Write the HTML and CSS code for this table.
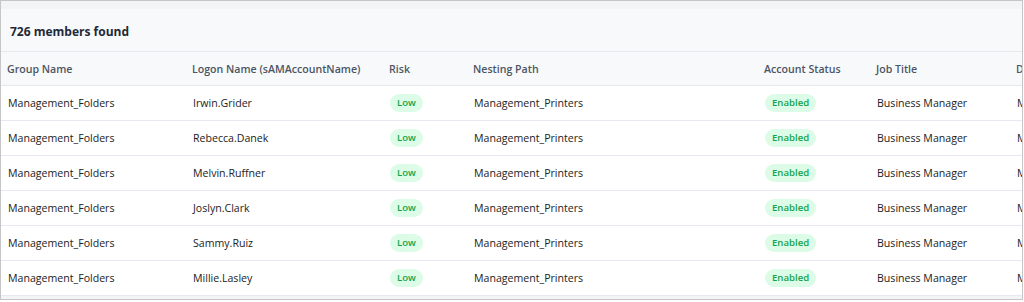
FILE: index.html
```html
<!DOCTYPE html>
<html>
<head>
<meta charset="utf-8">
<link rel="stylesheet" href="styles.css">
</head>
<body>
<div class="frame">
  <div class="title">726 members found</div>
  <table class="grid">
    <colgroup>
      <col class="c1"><col class="c2"><col class="c3"><col class="c4"><col class="c5"><col class="c6"><col class="c7">
    </colgroup>
    <thead>
      <tr>
        <th>Group Name</th><th>Logon Name (sAMAccountName)</th><th>Risk</th><th>Nesting Path</th><th>Account Status</th><th>Job Title</th><th>Department</th>
      </tr>
    </thead>
    <tbody>
      <tr><td>Management_Folders</td><td>Irwin.Grider</td><td><span class="pill">Low</span></td><td>Management_Printers</td><td><span class="pill">Enabled</span></td><td>Business Manager</td><td>Management</td></tr>
      <tr><td>Management_Folders</td><td>Rebecca.Danek</td><td><span class="pill">Low</span></td><td>Management_Printers</td><td><span class="pill">Enabled</span></td><td>Business Manager</td><td>Management</td></tr>
      <tr><td>Management_Folders</td><td>Melvin.Ruffner</td><td><span class="pill">Low</span></td><td>Management_Printers</td><td><span class="pill">Enabled</span></td><td>Business Manager</td><td>Management</td></tr>
      <tr><td>Management_Folders</td><td>Joslyn.Clark</td><td><span class="pill">Low</span></td><td>Management_Printers</td><td><span class="pill">Enabled</span></td><td>Business Manager</td><td>Management</td></tr>
      <tr><td>Management_Folders</td><td>Sammy.Ruiz</td><td><span class="pill">Low</span></td><td>Management_Printers</td><td><span class="pill">Enabled</span></td><td>Business Manager</td><td>Management</td></tr>
      <tr><td>Management_Folders</td><td>Millie.Lasley</td><td><span class="pill">Low</span></td><td>Management_Printers</td><td><span class="pill">Enabled</span></td><td>Business Manager</td><td>Management</td></tr>
    </tbody>
  </table>
</div>
</body>
</html>
```
FILE: styles.css
```css
html, body {
  margin: 0;
  padding: 0;
  background: #ffffff;
}
body {
  font-family: "Open Sans", "Noto Sans", sans-serif;
  color: #222;
}
.frame {
  box-sizing: border-box;
  width: 1023px;
  height: 300px;
  border: 1px solid #c6c6c6;
  background: #f3f4f6;
  padding-top: 8px;
  overflow: hidden;
}
.title {
  height: 43px;
  box-sizing: border-box;
  border-bottom: 1px solid #e6e8eb;
  background: #f8f9fb;
  display: flex;
  align-items: center;
  padding-left: 9px;
  padding-top: 2px;
  font-size: 12px;
  font-weight: 700;
  color: #1f2937;
}
.grid {
  border-collapse: collapse;
  table-layout: fixed;
  width: 1150px;
  background: #fff;
}
.c1 { width: 185px; }
.c2 { width: 197px; }
.c3 { width: 84px; }
.c4 { width: 291px; }
.c5 { width: 112px; }
.c6 { width: 140px; }
.c7 { width: 141px; }
.grid th {
  height: 33px;
  padding: 0 6px;
  text-align: left;
  font-size: 10.6px;
  font-weight: 600;
  color: #4b5563;
  background: #f8f9fb;
  border-bottom: 1px solid #e6e8eb;
  white-space: nowrap;
  overflow: hidden;
}
.grid td {
  height: 34px;
  padding: 0 6px 0 7px;
  font-size: 10.6px;
  color: #222;
  border-bottom: 1px solid #e6e9ef;
  white-space: nowrap;
  overflow: hidden;
}
.pill {
  display: inline-block;
  padding: 0 7px;
  height: 18px;
  line-height: 18px;
  border-radius: 9px;
  background: #dcfce7;
  color: #16a34a;
  font-size: 9.6px;
  font-weight: 600;
}
```
